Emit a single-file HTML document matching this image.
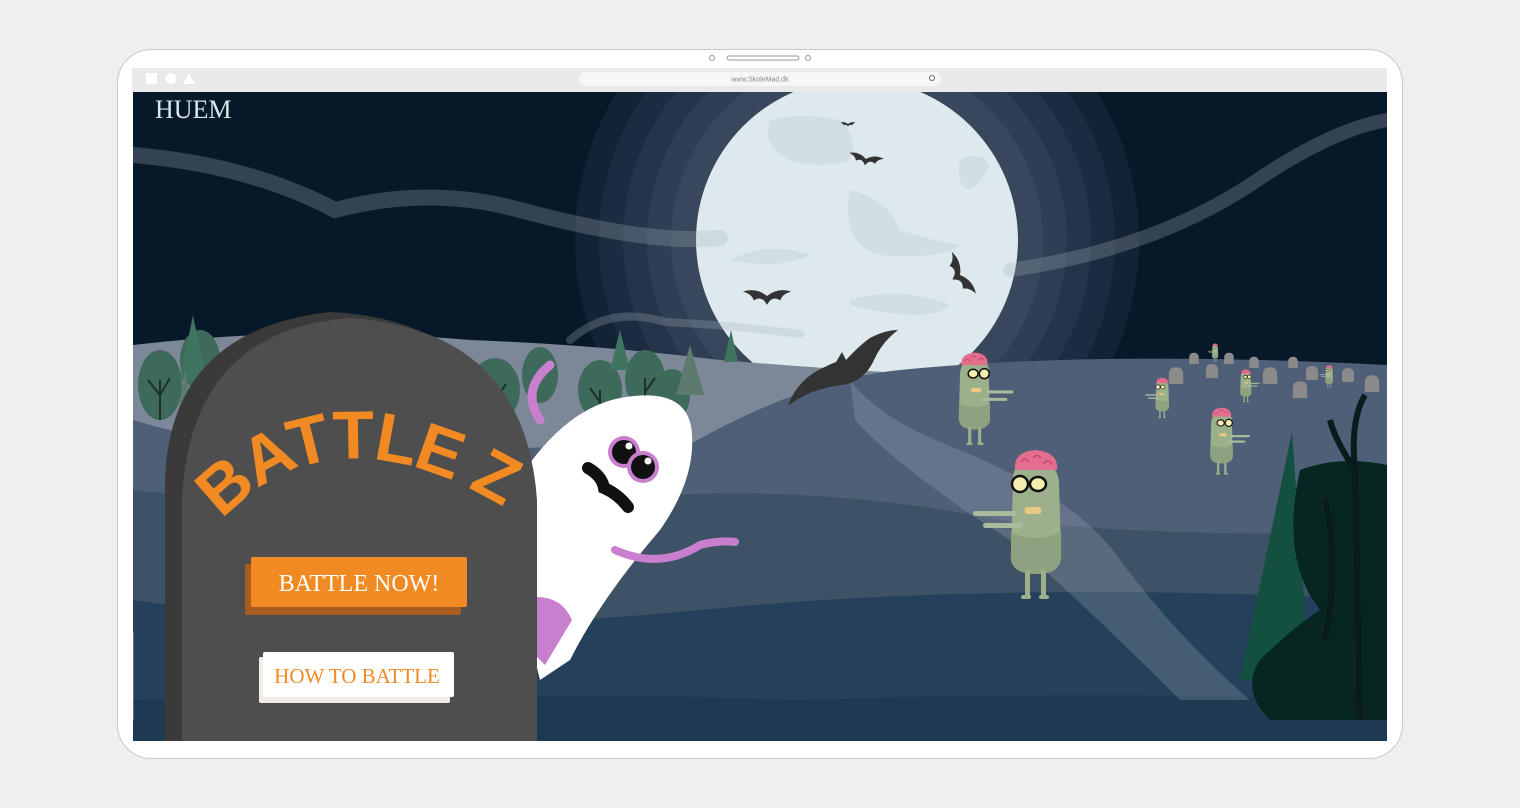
<!DOCTYPE html>
<html><head><meta charset="utf-8"><style>
html,body{margin:0;padding:0;background:#efefef;width:1520px;height:808px;overflow:hidden}
svg{display:block}
text{font-family:"Liberation Serif",serif}
</style></head><body>
<svg width="1520" height="808" viewBox="0 0 1520 808" xmlns="http://www.w3.org/2000/svg">
<defs>
<clipPath id="sc"><rect x="133" y="92" width="1254" height="649"/></clipPath>
<g id="zb">
 <path d="M-22 20 Q-24 0 0 -2 Q22 0 24 20 L26 90 Q28 112 2 112 Q-26 112 -24 92 Z" fill="#9cb08c"/>
 <path d="M-24 70 Q0 82 26 70 L26 90 Q28 112 2 112 Q-26 112 -24 92 Z" fill="#8ea27f"/>
 <rect x="-10" y="108" width="5" height="28" fill="#9cb08c"/><rect x="6" y="108" width="5" height="28" fill="#9cb08c"/>
 <rect x="-14" y="133" width="10" height="4" rx="2" fill="#9cb08c"/><rect x="4" y="133" width="10" height="4" rx="2" fill="#9cb08c"/>
 <path d="M-20 8 Q-22 -10 0 -12 Q24 -10 22 8 Z" fill="#e56d8f"/>
 <path d="M-14 0 q4 -6 8 0 M-2 -4 q4 -5 8 0 M8 2 q5 -6 9 0" stroke="#b8405f" stroke-width="1.2" fill="none"/>
 <circle cx="-15" cy="22" r="8" fill="#f6eeb0" stroke="#111" stroke-width="2.5"/>
 <ellipse cx="3" cy="22" rx="8" ry="7" fill="#f6eeb0" stroke="#111" stroke-width="2.5"/>
 <path d="M-9 45 h14 q3 4 0 7 h-14 q-3 -4 0 -7z" fill="#e9c97f"/>
 <rect x="-62" y="49" width="44" height="5" rx="2.5" fill="#a9bb9a"/>
 <rect x="-52" y="61" width="40" height="5" rx="2.5" fill="#a9bb9a"/>
</g>
<g id="ts"><path d="M-12 0 v-16 q0 -12 12 -12 q12 0 12 12 v16z" fill="#8a8a8a"/></g>
<g id="bat"><path d="M0 0 Q-10 -8 -22 -4 Q-14 -2 -12 4 Q-6 0 -2 5 L0 8 L2 5 Q6 0 12 4 Q14 -2 22 -4 Q10 -8 0 0z" fill="#333"/></g>
</defs>
<rect x="117.5" y="49.5" width="1285" height="709" rx="34" fill="#fff" stroke="#c8c8c8"/>
<circle cx="712" cy="58" r="2.5" fill="none" stroke="#999"/><circle cx="808" cy="58" r="2.5" fill="none" stroke="#999"/>
<rect x="727" y="56" width="72" height="4" rx="2" fill="none" stroke="#999"/>
<rect x="132" y="68" width="1255" height="24" fill="#e9e9e9"/>
<rect x="146" y="73" width="11" height="11" fill="#fff"/><circle cx="171" cy="78.5" r="5.5" fill="#fff"/><path d="M183 84 L189 73 L195 84z" fill="#fff"/>
<rect x="579" y="72" width="362" height="14" rx="7" fill="#f6f6f6"/>
<text x="760" y="81.5" font-size="7" fill="#888" text-anchor="middle" style="font-family:'Liberation Sans',sans-serif">www.SkoleMad.dk</text>
<circle cx="932" cy="78" r="2.5" fill="none" stroke="#666"/>
<g clip-path="url(#sc)">
<rect x="133" y="92" width="1254" height="649" fill="#071829"/>
<circle cx="857" cy="240" r="282" fill="#142236"/>
<circle cx="857" cy="240" r="258" fill="#1c2b3f"/>
<circle cx="857" cy="240" r="234" fill="#253448"/>
<circle cx="857" cy="240" r="210" fill="#2f3e52"/>
<circle cx="857" cy="240" r="186" fill="#38475b"/>
<circle cx="857" cy="240" r="161" fill="#dde9ec"/>
<path d="M770 120 q30 -8 70 0 q20 20 10 40 q-30 10 -60 0 q-30 -15 -20 -40z M850 190 q40 10 50 40 q30 10 60 15 q-20 15 -80 10 q-40 -10 -30 -65z M960 160 q20 -10 30 5 q-10 20 -20 25 q-15 -5 -10 -30z M730 260 q40 -20 80 -5 q-30 15 -80 5z M850 300 q50 -15 100 5 q-20 20 -100 0z" fill="#ccd8dc" opacity="0.6"/>
<!-- mist -->
<g fill="none" stroke="#a6b3c0" stroke-linecap="round" opacity="0.28">
<path d="M133 155 Q250 165 335 210 Q430 185 520 210 Q650 245 720 238" stroke-width="16"/>
<path d="M1010 270 Q1150 250 1250 185 Q1330 130 1387 120" stroke-width="14"/>
<path d="M570 340 Q610 305 665 322 Q730 325 800 334" stroke-width="8"/>
</g>
<!-- bats -->
<use href="#bat" transform="translate(848,124) scale(0.35)"/>
<use href="#bat" transform="translate(866,159) scale(0.8) rotate(10)"/>
<use href="#bat" transform="translate(767,296) scale(1.1)"/>
<use href="#bat" transform="translate(960,275) scale(1.1) rotate(60)"/>
<!-- hills -->
<path d="M133 345 Q300 325 470 340 Q600 345 720 360 Q900 375 1050 380 L1387 370 L1387 741 L133 741z" fill="#7c8798"/>
<path d="M680 450 Q800 380 900 370 Q1100 350 1387 365 L1387 741 L600 741z" fill="#4f5f78"/>
<path d="M133 420 Q300 470 500 450 Q620 440 700 460 L760 741 L133 741z" fill="#4f5f78"/>
<path d="M133 490 Q400 520 600 500 Q800 480 1000 520 Q1200 540 1387 530 L1387 741 L133 741z" fill="#3e5266"/>
<path d="M133 600 Q400 640 700 610 Q1000 580 1387 600 L1387 741 L133 741z" fill="#25405a"/>
<path d="M133 700 Q500 690 800 700 Q1100 690 1387 700 L1387 741 L133 741z" fill="#1e3a52"/>
<path d="M850 380 Q880 420 960 450 Q1080 500 1120 560 Q1180 640 1250 700 L1180 700 Q1080 600 1010 540 Q900 470 855 420z" fill="#a6b3c0" opacity="0.25"/>
<!-- big bat -->
<path d="M788 406 Q795 385 815 372 Q828 365 836 362 L842 352 L846 360 Q860 345 870 338 Q885 330 898 330 Q882 342 874 360 Q866 378 848 384 Q830 386 812 392 Q798 398 788 406z" fill="#333"/>
<!-- trees left -->
<g fill="#3e6a5c">
<ellipse cx="160" cy="385" rx="22" ry="35"/><ellipse cx="200" cy="360" rx="20" ry="30"/><ellipse cx="225" cy="380" rx="18" ry="28"/>
<ellipse cx="495" cy="390" rx="25" ry="32"/><ellipse cx="540" cy="375" rx="18" ry="28"/><ellipse cx="600" cy="390" rx="22" ry="30"/><ellipse cx="645" cy="380" rx="20" ry="30"/><ellipse cx="672" cy="395" rx="18" ry="26"/>
</g>
<g stroke="#1c2f2c" stroke-width="2" fill="none">
<path d="M160 420 V380 M160 395 L148 380 M160 395 L170 378 M495 420 V385 M495 400 L482 385 M495 400 L506 384 M600 420 V390 M600 402 L590 388 M645 410 V378 M645 392 L655 378"/>
</g>
<path d="M193 315 L180 380 L206 380z M620 330 L610 370 L630 370z M731 330 L724 362 L738 362z" fill="#3f7560"/>
<path d="M690 345 L676 395 L704 395z M185 370 L172 450 L200 450z" fill="#5d7a6f"/>
<!-- graveyard -->
<use href="#ts" transform="translate(1176,384) scale(0.6)"/><use href="#ts" transform="translate(1194,364) scale(0.4)"/><use href="#ts" transform="translate(1212,378) scale(0.5)"/><use href="#ts" transform="translate(1229,364) scale(0.4)"/>
<use href="#ts" transform="translate(1270,384) scale(0.6)"/><use href="#ts" transform="translate(1300,398) scale(0.6)"/><use href="#ts" transform="translate(1312,380) scale(0.5)"/><use href="#ts" transform="translate(1348,382) scale(0.5)"/><use href="#ts" transform="translate(1372,392) scale(0.6)"/><use href="#ts" transform="translate(1254,368) scale(0.4)"/><use href="#ts" transform="translate(1293,368) scale(0.4)"/>
<use href="#zb" transform="translate(1035,462) scale(1)"/>
<use href="#zb" transform="translate(975,360) scale(-0.62,0.62)"/>
<use href="#zb" transform="translate(1222,413) scale(-0.45,0.45)"/>
<use href="#zb" transform="translate(1162,381) scale(0.27)"/>
<use href="#zb" transform="translate(1246,372) scale(-0.22,0.22)"/>
<use href="#zb" transform="translate(1329,367) scale(0.15)"/>
<use href="#zb" transform="translate(1215,345) scale(0.12)"/>
<!-- right trees -->
<path d="M1292 432 L1240 680 L1310 680z" fill="#14503f"/>
<path d="M1300 470 Q1340 455 1387 465 L1387 720 L1270 720 Q1240 690 1260 660 Q1290 630 1320 610 Q1280 560 1300 470z" fill="#072622"/>
<path d="M1360 720 L1355 470 Q1350 420 1365 395 M1355 470 Q1335 440 1330 420 M1325 640 Q1340 560 1325 500" stroke="#0a1b1e" stroke-width="6" fill="none"/>
<!-- ghost -->
<path d="M540 420 Q520 390 550 365" stroke="#c87fce" stroke-width="9" fill="none" stroke-linecap="round"/>
<path d="M512 490 Q560 410 620 398 Q690 385 692 435 Q695 480 660 530 Q600 600 570 660 L540 680 L520 600z" fill="#fff"/>
<path d="M525 598 Q560 592 572 620 L545 665 L530 650z" fill="#c87fce"/>
<path d="M615 550 Q660 570 700 545 Q720 540 735 542" stroke="#c87fce" stroke-width="8" fill="none" stroke-linecap="round"/>
<circle cx="624" cy="452" r="16" fill="#c87fce"/><circle cx="624" cy="452" r="12" fill="#111"/><circle cx="629" cy="446" r="3.5" fill="#fff"/>
<circle cx="643" cy="467" r="16" fill="#c87fce"/><circle cx="643" cy="467" r="12" fill="#111"/><circle cx="648" cy="461" r="3.5" fill="#fff"/>
<path d="M588 468 Q602 476 604 488 Q618 494 628 507" stroke="#111" stroke-width="12" fill="none" stroke-linecap="round"/>
<!-- tombstone -->
<path d="M165 741 L165 480 Q170 330 330 312 Q500 320 520 480 L520 741z" fill="#3a3a3a"/>
<path d="M182 741 L182 500 Q190 330 350 318 Q525 330 537 500 L537 741z" fill="#4e4e4e"/>
<path d="M132 632 L132 720" stroke="#c87fce" stroke-width="3"/>
<path id="arc" d="M222 520 Q330 405 500 505" fill="none"/>
<text font-size="68" font-weight="bold" fill="#f28a23" letter-spacing="-2" style="font-family:'Liberation Sans',sans-serif"><textPath href="#arc">BATTLE  Z</textPath></text>
<rect x="245" y="564" width="216" height="51" rx="2" fill="#a85c1f"/>
<rect x="251" y="557" width="216" height="50" rx="2" fill="#f28a23"/>
<text x="359" y="591" font-size="24" fill="#fff" text-anchor="middle">BATTLE NOW!</text>
<rect x="259" y="657" width="191" height="46" rx="2" fill="#f3ece6"/>
<rect x="263" y="652" width="191" height="45" rx="2" fill="#fff"/>
<text x="357" y="683" font-size="21" fill="#f28a23" text-anchor="middle">HOW TO BATTLE</text>
<text x="155" y="118" font-size="26" fill="#dbe6ea">HUEM</text>
</g>
</svg>
</body></html>
